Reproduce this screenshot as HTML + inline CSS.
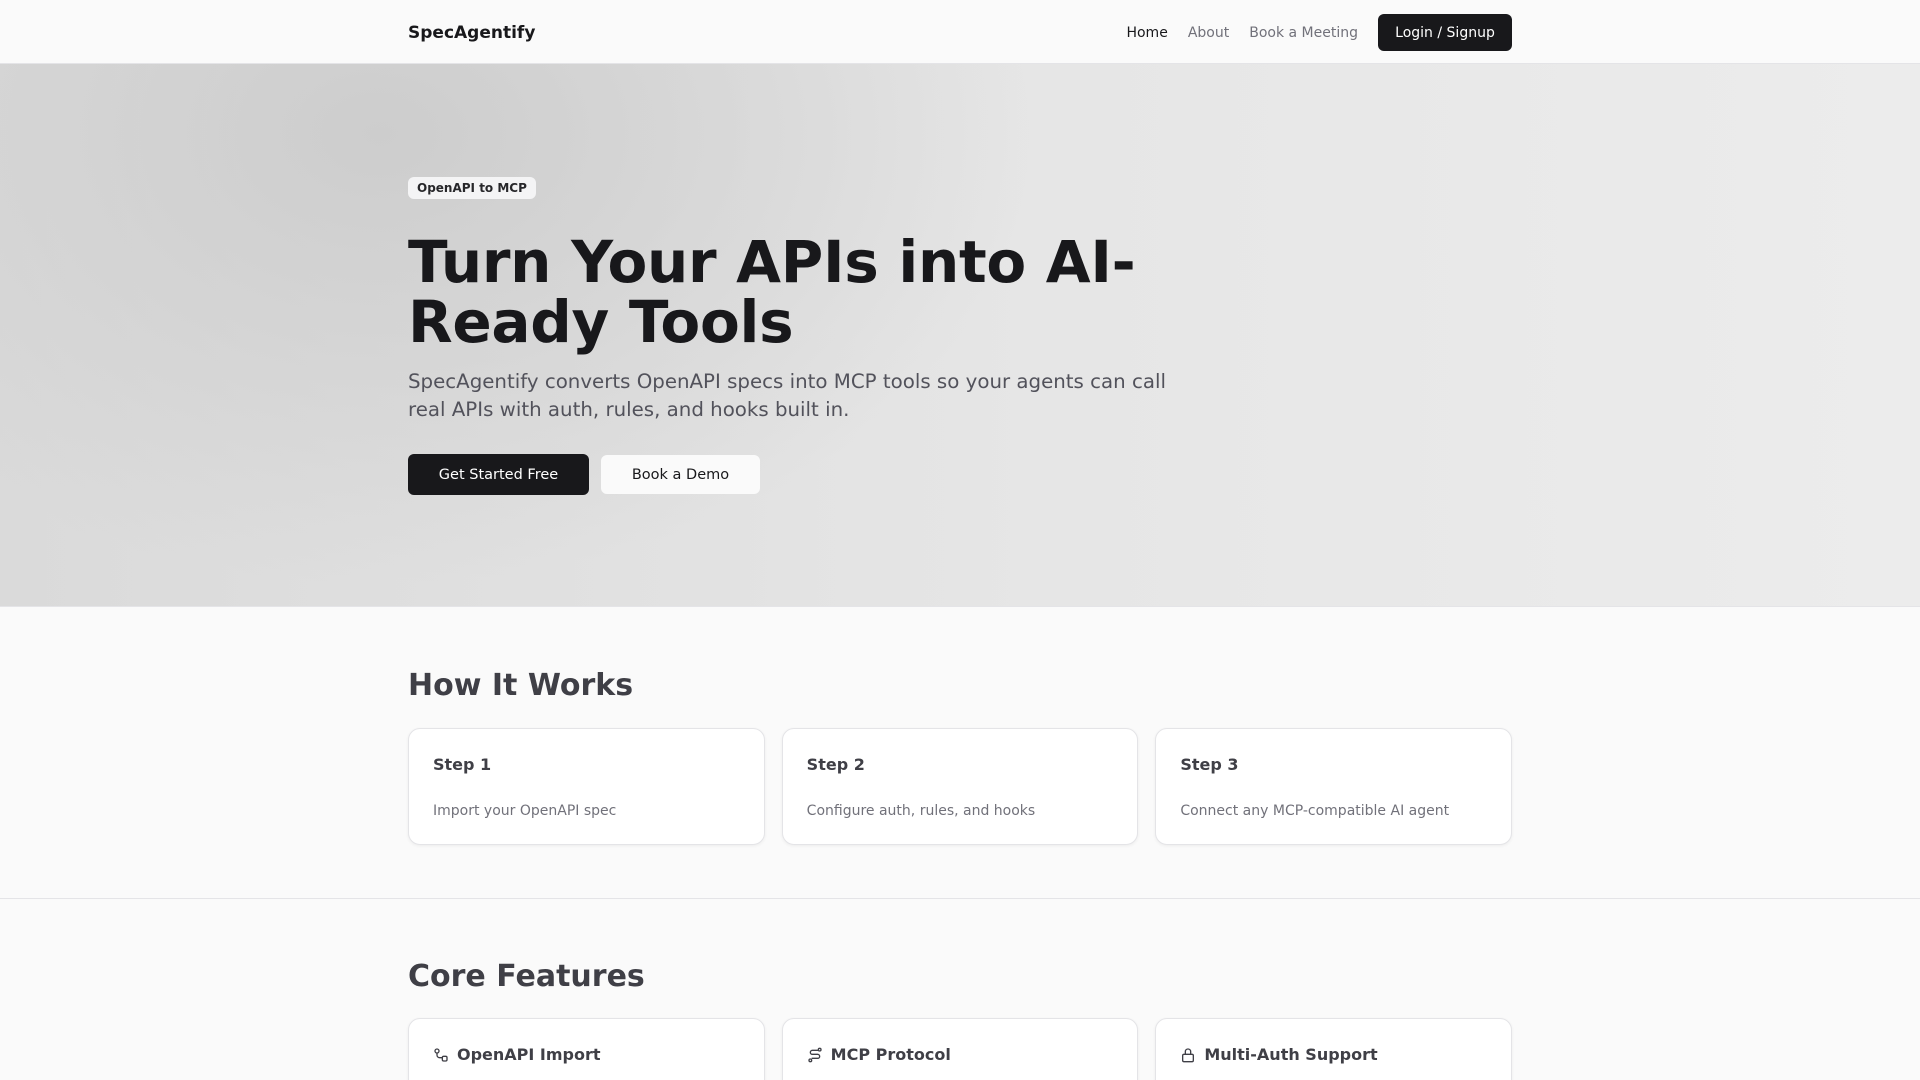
<!DOCTYPE html>
<html><head><meta charset="utf-8"><style>
*{box-sizing:border-box;margin:0;padding:0}
html{height:1080px;overflow:hidden}
body{width:1920px;height:1080px;overflow:hidden;background:#fafafa;font-family:"DejaVu Sans","Liberation Sans",sans-serif;color:#18181b}
.wrap{width:1104px;margin:0 auto;position:relative}
nav{height:64px;border-bottom:1px solid #e4e4e7;background:#fafafa}
nav .wrap{display:flex;align-items:center;height:64px;padding-top:1px}
.logo{font-weight:bold;font-size:17px}
.links{margin-left:auto;display:flex;align-items:center;font-size:14px;color:#71717a}
.links span{margin-left:20px}
.links .h{color:#18181b;margin-left:0}
.btn{background:#18181b;color:#fff;border-radius:6px;display:inline-flex;align-items:center;justify-content:center}
.login{margin-left:20px;width:134px;height:37px;font-size:14px}
.hero{height:543px;background:radial-gradient(ellipse 650px 450px at 380px 70px,#cdcdcd,rgba(220,220,220,0) 100%),linear-gradient(90deg,#dadada,#e6e6e6 55%,#ececec);border-bottom:1px solid #e4e4e7}
.hero .wrap{padding-top:113px}
.badge{display:inline-block;background:#f4f4f5;border-radius:6px;font-size:12px;font-weight:bold;padding:3px 9px;height:22px;line-height:16px;color:#27272a}
h1{font-size:58px;line-height:60px;font-weight:bold;margin-top:33px;letter-spacing:-0.3px;width:780px}
.sub{font-size:19.8px;line-height:28px;color:#52525b;margin-top:16px;width:800px}
.btns{margin-top:30px;display:flex}
.b1{width:181px;height:41px;font-size:14.5px}
.b2{width:159px;height:39px;font-size:14.5px;background:#fafafa;border-radius:6px;margin-left:12px;display:flex;align-items:center;justify-content:center;margin-top:1px}
h2{font-size:30px;font-weight:bold;color:#3f3f46}
.cards{display:flex;gap:17px}
.card{width:357px;background:#fff;border:1px solid #e4e4e7;border-radius:12px;box-shadow:0 1px 3px rgba(0,0,0,.06);padding:0 24px}
.ct{font-size:16px;font-weight:bold;color:#3f3f46}
.cd{font-size:14px;color:#71717a}
.s2{height:292px;border-bottom:1px solid #e4e4e7;padding-top:61px}
.s3{padding-top:60px}
</style></head><body>
<nav><div class="wrap"><div class="logo">SpecAgentify</div><div class="links"><span class="h">Home</span><span>About</span><span>Book a Meeting</span><div class="btn login">Login / Signup</div></div></div></nav>
<div class="hero"><div class="wrap">
<div class="badge">OpenAPI to MCP</div>
<h1>Turn Your APIs into AI-Ready Tools</h1>
<p class="sub">SpecAgentify converts OpenAPI specs into MCP tools so your agents can call real APIs with auth, rules, and hooks built in.</p>
<div class="btns"><div class="btn b1">Get Started Free</div><div class="b2">Book a Demo</div></div>
</div></div>
<div class="s2"><div class="wrap">
<h2>How It Works</h2>
<div class="cards" style="margin-top:25px">
<div class="card" style="height:117px"><div class="ct" style="margin-top:26px">Step 1</div><div class="cd" style="margin-top:29px">Import your OpenAPI spec</div></div>
<div class="card" style="height:117px"><div class="ct" style="margin-top:26px">Step 2</div><div class="cd" style="margin-top:29px">Configure auth, rules, and hooks</div></div>
<div class="card" style="height:117px"><div class="ct" style="margin-top:26px">Step 3</div><div class="cd" style="margin-top:29px">Connect any MCP-compatible AI agent</div></div>
</div></div></div>
<div class="s3"><div class="wrap">
<h2>Core Features</h2>
<div class="cards" style="margin-top:24px">
<div class="card" style="height:100px"><div class="ct" style="margin-top:26px;display:flex;align-items:center"><svg width="16" height="16" viewBox="0 0 24 24" fill="none" stroke="#3f3f46" stroke-width="2" style="margin-right:8px"><circle cx="6" cy="6" r="3"/><rect x="14" y="14" width="7" height="7" rx="2"/><path d="M6 9v3a4 4 0 0 0 4 4h4"/></svg>OpenAPI Import</div></div>
<div class="card" style="height:100px"><div class="ct" style="margin-top:26px;display:flex;align-items:center"><svg width="16" height="16" viewBox="0 0 24 24" fill="none" stroke="#3f3f46" stroke-width="2" style="margin-right:8px"><circle cx="19" cy="4" r="2"/><circle cx="5" cy="20" r="2"/><path d="M17 5H8a3 3 0 0 0 0 6h8a3 3 0 0 1 0 6H7"/></svg>MCP Protocol</div></div>
<div class="card" style="height:100px"><div class="ct" style="margin-top:26px;display:flex;align-items:center"><svg width="16" height="16" viewBox="0 0 24 24" fill="none" stroke="#3f3f46" stroke-width="2" style="margin-right:8px"><rect x="4" y="11" width="16" height="11" rx="2"/><path d="M8 11V7a4 4 0 0 1 8 0v4"/></svg>Multi-Auth Support</div></div>
</div></div></div>
</body></html>
